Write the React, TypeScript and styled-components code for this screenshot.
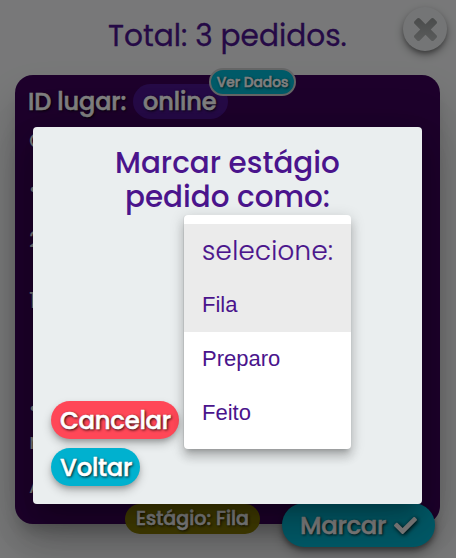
import React from "react";
import styled, { createGlobalStyle, css } from "styled-components";
import { FaCheck } from "react-icons/fa";

const GlobalStyle = createGlobalStyle`
  *, *::before, *::after { box-sizing: border-box; }
  html, body { margin: 0; padding: 0; overflow: hidden; }
  body { background: #eceff1; font-family: Poppins, Inter, sans-serif; }
  h1, h2, p, ul { margin: 0; padding: 0; }
  button { border: 0; margin: 0; font-family: inherit; }
`;

const whiteShadowText = css`
  color: #fff;
  text-shadow: 1px 1px 3px #000;
  -webkit-text-stroke: 0.5px #fff;
  white-space: nowrap;
`;

const Page = styled.main`
  position: relative;
  width: 456px;
  height: 558px;
  overflow: hidden;
  background: #f0f1f2;
`;

const TotalTitle = styled.h1`
  height: 75px;
  padding: 15px 0 0 108px;
  font-size: 29.6px;
  line-height: 42px;
  font-weight: 400;
  color: #4a148c;
  -webkit-text-stroke: 0.3px #4a148c;
  white-space: nowrap;
`;

const CloseButton = styled.button`
  position: absolute;
  top: 7px;
  left: 403px;
  width: 44px;
  height: 44px;
  padding: 0;
  display: grid;
  place-items: center;
  border-radius: 50%;
  background: #e9ebec;
  box-shadow: 0 3px 5px -1px rgba(0, 0, 0, 0.35), 0 4px 10px rgba(0, 0, 0, 0.3);
  svg { width: 23px; height: 23px; }
`;

const OrderCard = styled.section`
  position: relative;
  width: 425px;
  height: 449px;
  margin-left: 15px;
  padding: 9px 14px;
  border-radius: 18px;
  background: #3a0057;
  box-shadow: 0 11px 15px -7px rgba(0, 0, 0, 0.2), 0 24px 38px 3px rgba(0, 0, 0, 0.14);
`;

const PlaceRow = styled.div`
  display: flex;
  align-items: center;
  gap: 7px;
  height: 35px;
`;

const PlaceLabel = styled.span`
  ${whiteShadowText}
  width: 97px;
  margin-left: -1px;
  font-size: 24px;
  font-weight: 500;
  letter-spacing: -0.1px;
`;

const PlaceValue = styled(PlaceLabel)`
  width: 95px;
  height: 35px;
  margin-left: 1px;
  line-height: 36px;
  padding-left: 10px;
  border-radius: 18px;
  background: #4a148c;
`;

const DetailLine = styled.p<{ $height: number; $gap?: number }>`
  height: ${(p) => p.$height}px;
  margin-top: ${(p) => p.$gap ?? 0}px;
  line-height: ${(p) => p.$height}px;
  font-size: 22px;
  color: #eceff1;
`;

const DataBadge = styled.button`
  ${whiteShadowText}
  position: absolute;
  top: -7px;
  left: 194px;
  width: 87px;
  height: 28px;
  padding: 0;
  border: 2px solid #c8cacb;
  border-radius: 14px;
  background: #00b5d0;
  font-size: 13.8px;
  line-height: 25px;
  font-weight: 500;
`;

const StageBadge = styled.span`
  ${whiteShadowText}
  position: absolute;
  left: 110px;
  top: 429px;
  width: 135px;
  height: 30px;
  padding-left: 11px;
  border-radius: 15px;
  background: #827700;
  font-size: 19.1px;
  line-height: 30px;
  font-weight: 500;
`;

const MarkButton = styled.button`
  ${whiteShadowText}
  position: absolute;
  left: 267px;
  top: 428px;
  width: 153px;
  height: 44px;
  padding: 0 0 0 18px;
  display: flex;
  align-items: center;
  gap: 10px;
  border-radius: 22px;
  background: #00b5d0;
  box-shadow: 0 3px 5px rgba(0, 0, 0, 0.35), 0 6px 12px rgba(0, 0, 0, 0.25);
  font-size: 24.4px;
  font-weight: 500;
  letter-spacing: -0.3px;
  svg {
    width: 23px;
    height: 23px;
    filter: drop-shadow(1px 1px 2px #000);
  }
`;

const MarkText = styled.span`
  width: 84px;
`;

const Backdrop = styled.div`
  position: absolute;
  inset: 0;
  background: rgba(0, 0, 0, 0.5);
`;

const Dialog = styled.section`
  position: absolute;
  left: 33px;
  top: 127px;
  width: 389px;
  height: 377px;
  padding: 19px 18px 18px;
  display: flex;
  flex-direction: column;
  justify-content: space-between;
  border-radius: 4px;
  background: #eaeeef;
  box-shadow: 0 11px 15px -7px rgba(0, 0, 0, 0.2), 0 24px 38px 3px rgba(0, 0, 0, 0.14),
    0 9px 46px 8px rgba(0, 0, 0, 0.12);
`;

const DialogTitle = styled.h2`
  color: #4a148c;
  font-size: 29.4px;
  line-height: 34px;
  font-weight: 500;
  white-space: nowrap;
`;

const TitleLine = styled.span<{ $indent: number }>`
  display: block;
  padding-left: ${(p) => p.$indent}px;
`;

const Actions = styled.div`
  display: flex;
  flex-direction: column;
  align-items: flex-start;
  gap: 9px;
`;

const ActionButton = styled.button<{ $width: number; $color: string }>`
  ${whiteShadowText}
  width: ${(p) => p.$width}px;
  height: 38px;
  padding: 0 0 0 9px;
  text-align: left;
  border-radius: 19px;
  background: ${(p) => p.$color};
  box-shadow: 0 3px 5px -1px rgba(0, 0, 0, 0.2), 0 5px 10px rgba(0, 0, 0, 0.22);
  font-size: 24.4px;
  line-height: 39px;
  font-weight: 500;
  letter-spacing: -0.3px;
`;

const SelectMenu = styled.ul`
  position: absolute;
  left: 184px;
  top: 215px;
  width: 167px;
  height: 234px;
  padding: 9px 0;
  list-style: none;
  border-radius: 4px;
  background: #fff;
  box-shadow: -1px 0 0 rgba(0, 0, 0, 0.05), 0 5px 5px -3px rgba(0, 0, 0, 0.2), 0 8px 10px 1px rgba(0, 0, 0, 0.14),
    0 3px 14px 2px rgba(0, 0, 0, 0.12);
`;

const MenuItem = styled.li<{ $shaded?: boolean }>`
  height: 54px;
  padding-left: 18px;
  line-height: 53px;
  font-family: "Liberation Sans", Arial, sans-serif;
  font-size: 22px;
  color: #4a148c;
  background: ${(p) => (p.$shaded ? "#ebebeb" : "#fff")};
`;

const MenuHeading = styled(MenuItem)`
  font-family: Poppins, Inter, sans-serif;
  font-size: 26px;
  font-weight: 300;
  line-height: 54px;
  letter-spacing: 0.35px;
  -webkit-text-stroke: 0.2px #4a148c;
`;

export default function App() {
  return (
    <Page>
      <GlobalStyle />
      <TotalTitle>Total: 3 pedidos.</TotalTitle>
      <CloseButton aria-label="Fechar">
        <svg viewBox="110 -18 1188 1188">
          <defs>
            <linearGradient id="crossFill" x1="0" y1="0" x2="0" y2="1">
              <stop offset="0" stopColor="#959898" />
              <stop offset="1" stopColor="#b4b7b7" />
            </linearGradient>
          </defs>
          <path
            fill="url(#crossFill)"
            d="M1298 956q0 40-28 68l-136 136q-28 28-68 28t-68-28l-294-294-294 294q-28 28-68 28t-68-28l-136-136q-28-28-28-68t28-68l294-294-294-294q-28-28-28-68t28-68l136-136q28-28 68-28t68 28l294 294 294-294q28-28 68-28t68 28l136 136q28 28 28 68t-28 68l-294 294 294 294q28 28 28 68z"
            transform="translate(0 -18)"
          />
        </svg>
      </CloseButton>
      <OrderCard>
        <PlaceRow>
          <PlaceLabel>ID lugar:</PlaceLabel>
          <PlaceValue>online</PlaceValue>
        </PlaceRow>
        <DetailLine $height={44}>C</DetailLine>
        <DetailLine $height={54}>•</DetailLine>
        <DetailLine $height={46}>2</DetailLine>
        <DetailLine $height={76}>1</DetailLine>
        <DetailLine $height={46} $gap={47}>•</DetailLine>
        <DetailLine $height={20}>n</DetailLine>
        <DetailLine $height={68}>A</DetailLine>
        <DataBadge>Ver Dados</DataBadge>
        <StageBadge>Estágio: Fila</StageBadge>
        <MarkButton><MarkText>Marcar</MarkText><FaCheck /></MarkButton>
      </OrderCard>
      <Backdrop />
      <Dialog>
        <DialogTitle>
          <TitleLine $indent={64}>Marcar estágio</TitleLine>
          <TitleLine $indent={74}>pedido como:</TitleLine>
        </DialogTitle>
        <Actions>
          <ActionButton $width={128} $color="#ff4757">Cancelar</ActionButton>
          <ActionButton $width={89} $color="#00b1cf">Voltar</ActionButton>
        </Actions>
      </Dialog>
      <SelectMenu>
        <MenuHeading $shaded>selecione:</MenuHeading>
        <MenuItem $shaded>Fila</MenuItem>
        <MenuItem>Preparo</MenuItem>
        <MenuItem>Feito</MenuItem>
      </SelectMenu>
    </Page>
  );
}
